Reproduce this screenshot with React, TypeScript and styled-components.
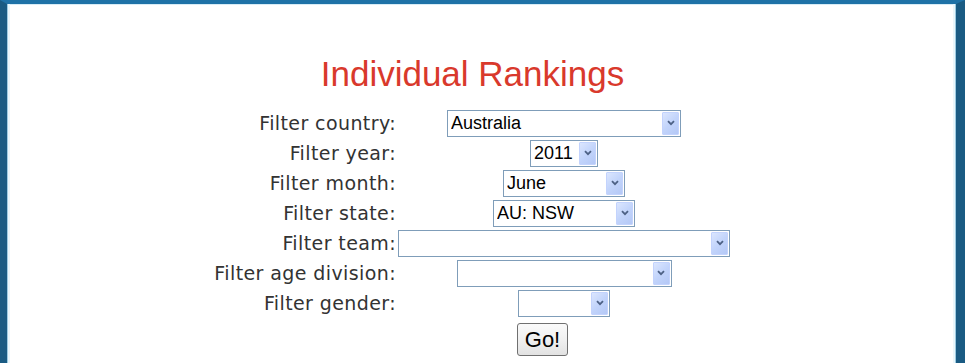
import React from "react";
import styled, { createGlobalStyle } from "styled-components";

const Global = createGlobalStyle`
  html, body { margin: 0; padding: 0; background: #ffffff; }
  body { width: 965px; height: 363px; overflow: hidden; }
`;

const Frame = styled.div`
  position: relative;
  box-sizing: border-box;
  width: 965px;
  height: 363px;
  overflow: hidden;
  background: #ffffff;
  border-top: 4px solid #1f72a7;
  border-left: 7px solid #1a5b83;
  border-right: 9px solid #1a5b83;
  box-shadow: inset 1px 0 0 #9ccbe2, inset 3px 0 0 #eaf6fb, inset -1px 0 0 #9ccbe2,
    inset -3px 0 0 #eaf6fb, inset 0 1px 0 #d8ecf6;
`;

const TopMark = styled.span`
  position: absolute;
  top: -4px;
  left: 610px;
  width: 4px;
  height: 3px;
  background: #f4f8fb;
  border-radius: 0 0 2px 2px;
`;

const Title = styled.h1`
  margin: 49px 0 0 0;
  padding-right: 18px;
  text-align: center;
  font-family: "Liberation Sans", Arial, sans-serif;
  font-weight: normal;
  font-size: 35px;
  line-height: 41px;
  color: #d9392c;
`;

const Form = styled.form`
  display: grid;
  grid-template-columns: 190px 332px;
  grid-auto-rows: 30px;
  column-gap: 2px;
  margin: 14px 0 0 199px;
  align-items: center;
`;

const Label = styled.label`
  justify-self: end;
  font-family: "DejaVu Sans", Verdana, sans-serif;
  font-size: 19px;
  letter-spacing: 0.4px;
  color: #333333;
  white-space: nowrap;
`;

const SelectWrap = styled.div<{ $w: number }>`
  position: relative;
  justify-self: center;
  width: ${(p) => p.$w}px;
  height: 27px;
`;

const NativeSelect = styled.select`
  appearance: none;
  -webkit-appearance: none;
  box-sizing: border-box;
  width: 100%;
  height: 100%;
  margin: 0;
  padding: 0 20px 0 3px;
  border: 1px solid #7f9db9;
  border-radius: 0;
  background: #ffffff;
  font-family: "Liberation Sans", Arial, sans-serif;
  font-size: 18px;
  color: #000000;
  outline: none;
`;

const ArrowButton = styled.span`
  position: absolute;
  top: 2px;
  right: 2px;
  bottom: 2px;
  width: 17px;
  box-sizing: border-box;
  border: 1px solid #c3d3fd;
  border-radius: 1px;
  background: linear-gradient(135deg, #dbe6fe 0%, #c2d4fb 50%, #b4c8f6 100%);
  display: flex;
  align-items: center;
  justify-content: center;
  pointer-events: none;
`;

const GoButton = styled.button`
  grid-column: 2;
  justify-self: start;
  align-self: start;
  margin: 5px 0 0 119px;
  width: 51px;
  height: 33px;
  padding: 0;
  border: 1px solid #707070;
  border-radius: 3px;
  background: linear-gradient(#fafafa 0%, #f0f0f0 50%, #e2e2e2 100%);
  font-family: "Liberation Sans", Arial, sans-serif;
  font-size: 22px;
  color: #000000;
`;

const Chevron = () => (
  <svg width="8" height="6" viewBox="0 0 8 6">
    <path d="M1 1.2 L4 4.2 L7 1.2" fill="none" stroke="#4d6185" strokeWidth="1.8" />
  </svg>
);

type Row = { label: string; value: string; width: number };

const rows: Row[] = [
  { label: "Filter country:", value: "Australia", width: 234 },
  { label: "Filter year:", value: "2011", width: 68 },
  { label: "Filter month:", value: "June", width: 122 },
  { label: "Filter state:", value: "AU: NSW", width: 142 },
  { label: "Filter team:", value: "", width: 332 },
  { label: "Filter age division:", value: "", width: 215 },
  { label: "Filter gender:", value: "", width: 92 },
];

export default function App() {
  return (
    <>
      <Global />
      <Frame>
        <TopMark />
        <Title>Individual Rankings</Title>
        <Form onSubmit={(e) => e.preventDefault()}>
          {rows.map((r) => (
            <React.Fragment key={r.label}>
              <Label>{r.label}</Label>
              <SelectWrap $w={r.width}>
                <NativeSelect defaultValue={r.value}>
                  <option value={r.value}>{r.value}</option>
                </NativeSelect>
                <ArrowButton>
                  <Chevron />
                </ArrowButton>
              </SelectWrap>
            </React.Fragment>
          ))}
          <GoButton type="submit">Go!</GoButton>
        </Form>
      </Frame>
    </>
  );
}
